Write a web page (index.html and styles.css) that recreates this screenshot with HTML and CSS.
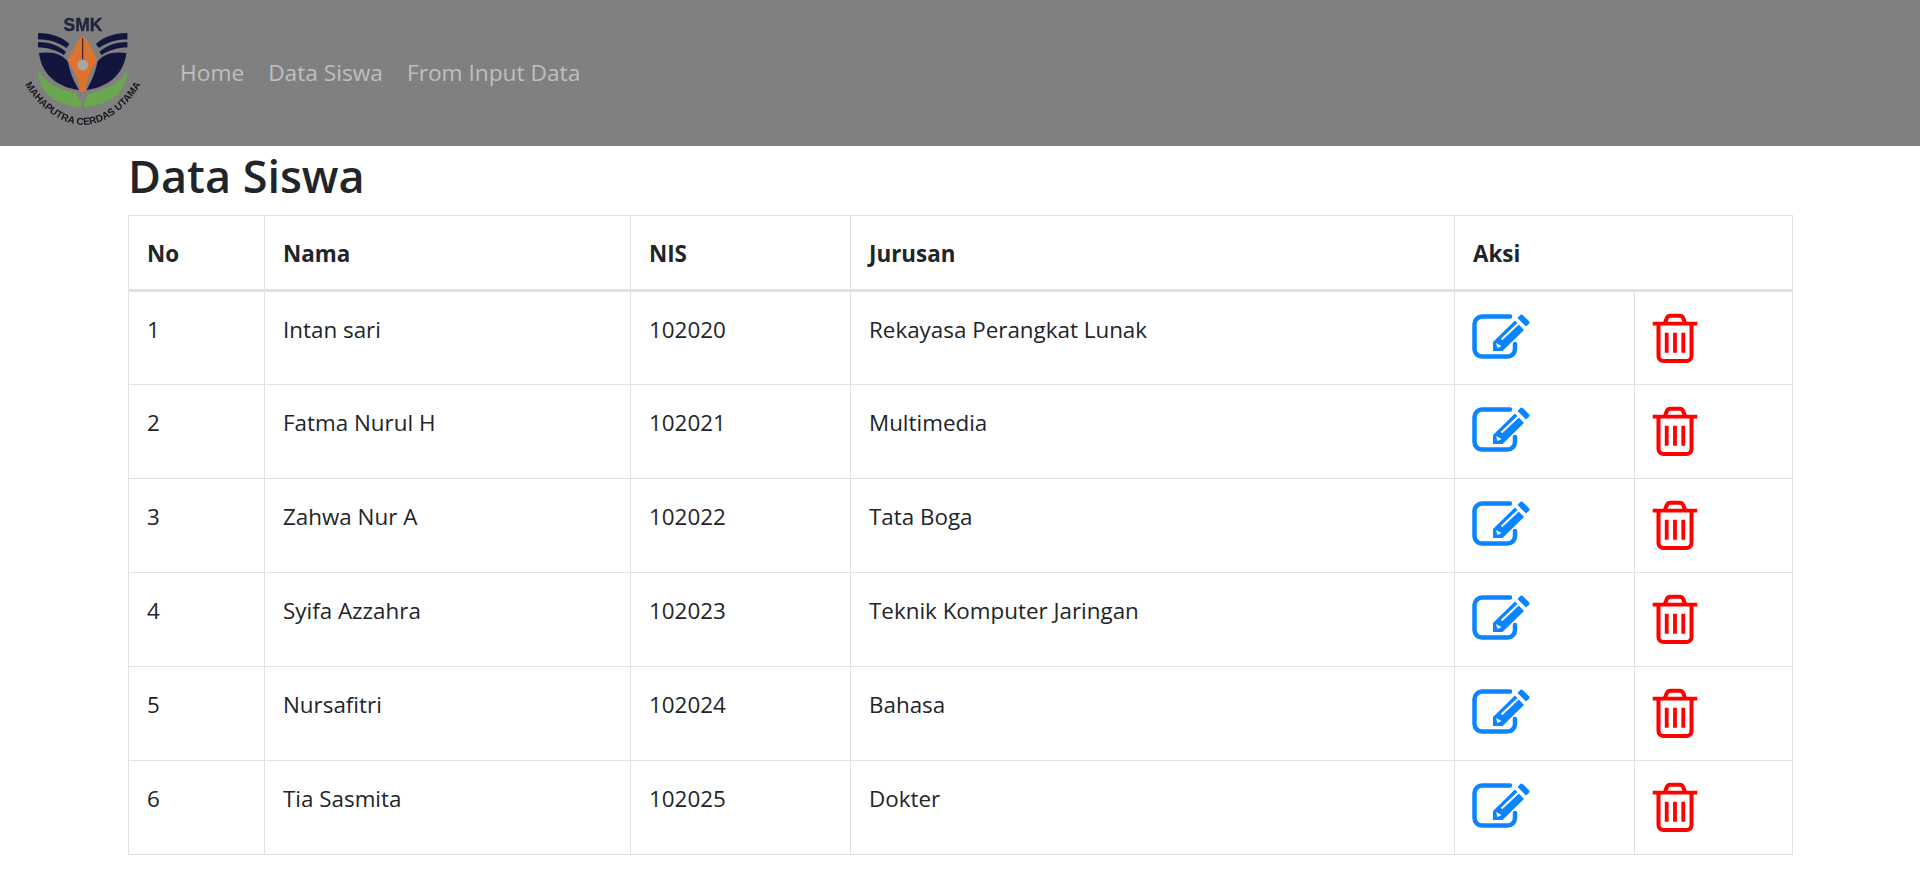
FILE: index.html
```html
<!DOCTYPE html>
<html lang="id">
<head>
<meta charset="utf-8">
<title>Data Siswa</title>
<link rel="stylesheet" href="styles.css">
</head>
<body>
<svg class="defs" width="0" height="0" aria-hidden="true">
  <symbol id="ic-edit" viewBox="0 0 62 52">
    <path d="M40 5.600H12a7.500 7.500 0 0 0-7.500 7.500v25a7.500 7.500 0 0 0 7.500 7.500h25.500a7.500 7.500 0 0 0 7.500-7.500v-5" fill="none" stroke="#0a84ff" stroke-width="4.500" stroke-linecap="round"/>
    <path d="M23 31L45 9.500 54 19 32.500 40H23z" fill="#0a84ff"/>
    <path d="M47.500 7l2.600-2.800a2 2 0 0 1 2.900 0l5.800 5.800a2 2 0 0 1 0 2.900L56 15.500z" fill="#0a84ff"/>
    <path d="M31.500 28.500L49 12" stroke="#fff" stroke-width="2"/>
    <path d="M26 32l5.500 3-4 2z" fill="#fff"/>
  </symbol>
  <symbol id="ic-trash" viewBox="0 0 50 54">
    <path d="M2.700 12.700h44.600" stroke="#f00" stroke-width="3.800"/>
    <path d="M8.500 13v32a5 5 0 0 0 5 5h23a5 5 0 0 0 5-5V13M15 12l1.800-5a4 4 0 0 1 3.700-2.300h9a4 4 0 0 1 3.700 2.300l1.800 5" fill="none" stroke="#f00" stroke-width="4"/>
    <path d="M16.700 21.700v20M25 21.700v20M33.300 21.700v20" stroke="#f00" stroke-width="3.800"/>
  </symbol>
</svg>
<nav class="navbar">
  <a class="brand" href="#">
    <svg class="logo" viewBox="0 0 160 146" width="160" height="146">
      <defs>
        <g id="logo-half">
          <path d="M38 33C52 33 62 37 69.500 44L66.500 48C58 42 49 39.500 38 39.500Z" fill="#12163f"/>
          <path d="M38 42C50 42 60 46 66 52L64 55C56 50 48 47.500 38 47.500Z" fill="#12163f"/>
          <path d="M39 53C52 51 63 54 68 62C70 72 73 80 79 90C62 88 42 78 39 53Z" fill="#12163f"/>
          <path d="M38 69C42 82 60 90 76 93C79 97 81 102 82 107C60 106 38 95 38 69Z" fill="#6aa84f"/>
        </g>
      </defs>
      <text x="83" y="31" class="logo-smk">SMK</text>
      <use href="#logo-half"/>
      <use href="#logo-half" transform="translate(165.400 0) scale(-1 1)"/>
      <path d="M82.700 35C88 42 93 50 97 60C92 70 87 76 86 88C85 94 80 94 79.500 88C78 76 73 70 68 60C72 50 77 42 82.700 35Z" fill="#e0722a"/>
      <path d="M82.700 38V60" stroke="#12163f" stroke-width="1"/>
      <path d="M74 53l3-5M73 58l2-2M91 53l-3-5M92 58l-2-2" stroke="#9a8a80" stroke-width="1.500" stroke-dasharray="2 1.500"/>
      <circle cx="82.700" cy="65" r="5.500" fill="#a6a6a6"/>
      <path id="logo-arc" d="M20 75C36 108 62 125 83 125S130 108 146 75" fill="none"/>
      <text class="logo-arc-text"><textPath href="#logo-arc" startOffset="50%">MAHAPUTRA CERDAS UTAMA</textPath></text>
    </svg>
  </a>
  <ul class="nav">
    <li><a href="#">Home</a></li>
    <li><a href="#">Data Siswa</a></li>
    <li><a href="#">From Input Data</a></li>
  </ul>
</nav>
<main class="container">
  <h1>Data Siswa</h1>
  <table class="table">
    <colgroup>
      <col class="c1"><col class="c2"><col class="c3"><col class="c4"><col class="c5"><col class="c6">
    </colgroup>
    <thead>
      <tr><th>No</th><th>Nama</th><th>NIS</th><th>Jurusan</th><th colspan="2">Aksi</th></tr>
    </thead>
    <tbody>
      <tr><td>1</td><td>Intan sari</td><td>102020</td><td>Rekayasa Perangkat Lunak</td><td><svg class="icon-edit"><use href="#ic-edit"/></svg></td><td><svg class="icon-trash"><use href="#ic-trash"/></svg></td></tr>
      <tr><td>2</td><td>Fatma Nurul H</td><td>102021</td><td>Multimedia</td><td><svg class="icon-edit"><use href="#ic-edit"/></svg></td><td><svg class="icon-trash"><use href="#ic-trash"/></svg></td></tr>
      <tr><td>3</td><td>Zahwa Nur A</td><td>102022</td><td>Tata Boga</td><td><svg class="icon-edit"><use href="#ic-edit"/></svg></td><td><svg class="icon-trash"><use href="#ic-trash"/></svg></td></tr>
      <tr><td>4</td><td>Syifa Azzahra</td><td>102023</td><td>Teknik Komputer Jaringan</td><td><svg class="icon-edit"><use href="#ic-edit"/></svg></td><td><svg class="icon-trash"><use href="#ic-trash"/></svg></td></tr>
      <tr><td>5</td><td>Nursafitri</td><td>102024</td><td>Bahasa</td><td><svg class="icon-edit"><use href="#ic-edit"/></svg></td><td><svg class="icon-trash"><use href="#ic-trash"/></svg></td></tr>
      <tr><td>6</td><td>Tia Sasmita</td><td>102025</td><td>Dokter</td><td><svg class="icon-edit"><use href="#ic-edit"/></svg></td><td><svg class="icon-trash"><use href="#ic-trash"/></svg></td></tr>
    </tbody>
  </table>
</main>
</body>
</html>
```
FILE: styles.css
```css
* { box-sizing: border-box; }
html, body { margin: 0; padding: 0; }
body {
  font-family: "Open Sans", "Noto Sans", "Liberation Sans", sans-serif;
  font-size: 16px;
  line-height: 24px;
  color: #212529;
  background: #fff;
  overflow: hidden;
}
.defs { position: absolute; }
.navbar {
  height: 146px;
  background: #808080;
  display: flex;
  align-items: center;
}
.brand { display: block; flex: none; width: 160px; height: 146px; }
.logo { display: block; filter: blur(0.4px); }
.logo-smk { font: 700 17.500px "Liberation Sans", sans-serif; fill: #23243f; stroke: #23243f; stroke-width: 0.4px; text-anchor: middle; }
.logo-arc-text { font: 700 10px "Liberation Sans", sans-serif; fill: #15151f; text-anchor: middle; }
.nav {
  list-style: none;
  display: flex;
  margin: 0 0 0 8px;
  padding: 0;
}
.nav a {
  display: block;
  padding: 8px 12px;
  font-size: 22.700px;
  color: rgba(255, 255, 255, 0.5);
  text-decoration: none;
}
.container { margin: 0 128px; }
h1 {
  margin: 0;
  padding-top: 3px;
  height: 69px;
  font-size: 45px;
  line-height: 54px;
  font-weight: 600;
}
.table {
  width: 1664px;
  border-collapse: collapse;
  table-layout: fixed;
  font-size: 22.400px;
}
.c1 { width: 136px; }
.c2 { width: 366px; }
.c3 { width: 220px; }
.c4 { width: 604px; }
.c5 { width: 180px; }
.c6 { width: 158px; }
th, td {
  border: 1px solid #dee2e6;
  text-align: left;
  vertical-align: top;
}
td { padding: 18px; height: 94px; line-height: 39px; }
th {
  padding: 20px 18px 16px;
  height: 75px;
  font-weight: 700;
  border-bottom: 3px solid #dee2e6;
  line-height: 36px;
}
.icon-edit { display: block; width: 62px; height: 52px; margin: 1px 0 0 -3px; }
.icon-trash { display: block; width: 50px; height: 54px; margin: 1px 0 0 -3px; }
```
